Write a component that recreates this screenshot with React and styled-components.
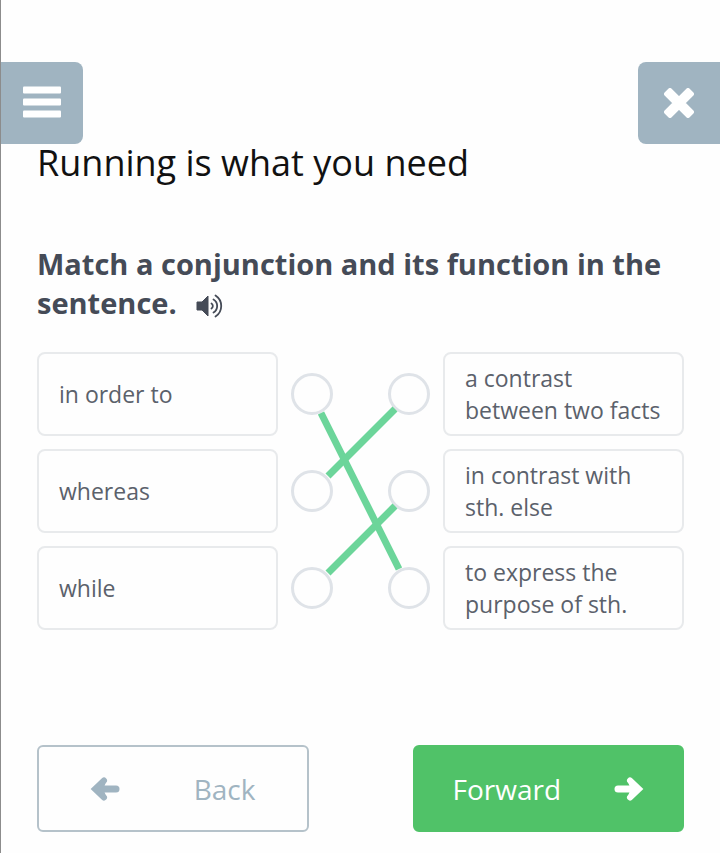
import React from 'react';
import styled, { createGlobalStyle } from 'styled-components';

const GlobalStyle = createGlobalStyle`
	* {
		box-sizing: border-box;
	}

	body {
		margin: 0;
		background: #fefefe;
		font-family: 'Open Sans', 'Noto Sans', sans-serif;
	}
`;

const ROW_HEIGHT = 84;
const ROW_GAP = 13;

const ui = {
	Page: styled.main`
		min-height: 100vh;
		padding-top: 62px;
		border-left: 1px solid #8c8c8c;
	`,
	TopBar: styled.header`
		display: flex;
		justify-content: space-between;
	`,
	CornerButton: styled.button`
		display: flex;
		align-items: center;
		justify-content: center;
		width: 82px;
		height: 82px;
		padding: 0;
		border: 0;
		border-radius: ${({ $side }) => ($side === 'left' ? '0 8px 8px 0' : '8px 0 0 8px')};
		background: #a0b4c1;
		color: #fff;
		cursor: pointer;
	`,
	Content: styled.section`
		padding: 0 36px 20px;
	`,
	Title: styled.h1`
		margin: 0 0 62px;
		color: #111;
		font-size: 36px;
		font-weight: 400;
		line-height: 38px;
	`,
	Task: styled.h2`
		margin: 0 0 30px;
		color: #454b57;
		font-size: 29px;
		font-weight: 700;
		line-height: 39px;
	`,
	SoundButton: styled.button`
		margin: 0 0 0 12px;
		padding: 0;
		border: 0;
		background: none;
		color: #454b57;
		vertical-align: middle;
		cursor: pointer;

		svg {
			display: block;
		}
	`,
	Match: styled.div`
		display: grid;
		grid-template-columns: 1fr 165px 1fr;
	`,
	Column: styled.ul`
		display: grid;
		grid-auto-rows: ${ROW_HEIGHT}px;
		gap: ${ROW_GAP}px;
		margin: 0;
		padding: 0;
		list-style: none;
	`,
	Card: styled.li`
		display: flex;
		align-items: center;
		padding: 0 20px;
		border: 2px solid #e8eaec;
		border-radius: 8px;
		color: #5b616b;
		font-size: 23px;
		line-height: 32px;
	`,
	Links: styled.div`
		position: relative;
		display: grid;
		grid-auto-rows: ${ROW_HEIGHT}px;
		gap: ${ROW_GAP}px;
	`,
	Lines: styled.svg`
		position: absolute;
		inset: 0;
		width: 100%;
		height: 100%;
		pointer-events: none;
	`,
	DotRow: styled.div`
		display: flex;
		align-items: center;
		justify-content: space-between;
		padding: 0 13px;
	`,
	Dot: styled.button`
		width: 42px;
		height: 42px;
		padding: 0;
		border: 3px solid #dfe3e8;
		border-radius: 50%;
		background: #fefefe;
		cursor: pointer;
	`,
	Footer: styled.footer`
		display: grid;
		grid-template-columns: 1fr 1fr;
		gap: 104px;
		margin-top: 115px;
	`,
	NavButton: styled.button`
		display: flex;
		align-items: center;
		justify-content: space-between;
		height: 87px;
		padding: ${({ $primary }) => ($primary ? '0 38px' : '0 51px')};
		border: 2px solid ${({ $primary }) => ($primary ? '#50c268' : '#b5c2ca')};
		border-radius: 6px;
		background: ${({ $primary }) => ($primary ? '#50c268' : 'transparent')};
		color: ${({ $primary }) => ($primary ? '#fff' : '#a0b4c1')};
		font-family: inherit;
		font-size: 28px;
		cursor: pointer;
	`
};

const PAIRS = [
	{ left: 'in order to', right: 'a contrast between two facts' },
	{ left: 'whereas', right: 'in contrast with sth. else' },
	{ left: 'while', right: 'to express the purpose of sth.' }
];

const LINES = [
	{ x1: 43, y1: 61, x2: 121, y2: 217 },
	{ x1: 50, y1: 124, x2: 117, y2: 57 },
	{ x1: 50, y1: 221, x2: 117, y2: 154 }
];

const MenuIcon = () => (
	<svg width="38" height="34" viewBox="0 0 38 34" fill="currentColor" aria-hidden="true">
		<rect width="38" height="7" y="0.500" rx="1" />
		<rect y="12.500" width="38" height="7" rx="1" />
		<rect y="24.500" width="38" height="7" rx="1" />
	</svg>
);

const CloseIcon = () => (
	<svg width="30" height="30" viewBox="0 0 30 30" aria-hidden="true">
		<path
			d="M6 2 2 6 11 15 2 24 6 28 15 19 24 28 28 24 19 15 28 6 24 2 15 11z"
			fill="currentColor"
			stroke="currentColor"
			strokeWidth="4"
			strokeLinejoin="round"
		/>
	</svg>
);

const SoundIcon = () => (
	<svg width="28" height="24" viewBox="0 0 28 24" fill="none" aria-hidden="true">
		<path d="M1 8h5l6-6v20l-6-6H1z" fill="currentColor" stroke="currentColor" strokeLinejoin="round" />
		<path
			d="M15.500 9.500a3 3 0 0 1 0 5M17.500 5.500a7.600 7.600 0 0 1 0 13M19.500 1.500a12.500 12.500 0 0 1 0 21"
			stroke="currentColor"
			strokeWidth="1.800"
			strokeLinecap="round"
		/>
	</svg>
);

const ArrowIcon = ({ back }) => (
	<svg width="30" height="26" viewBox="0 0 30 26" fill="none" aria-hidden="true">
		<g
			transform={back ? 'matrix(-1 0 0 1 30 0)' : undefined}
			stroke="currentColor"
			strokeLinecap="round"
		>
			<path d="M4 13h16" strokeWidth="7" />
			<path d="M16 4.500 25 13l-9 8.500" strokeWidth="6" strokeLinejoin="miter" />
			<path d="M14 6 15.500 10v6L14 20l4 2 7-9-7-9z" fill="currentColor" stroke="none" />
		</g>
	</svg>
);

const App = () => {
	return (
		<React.Fragment>
			<GlobalStyle />
			<ui.Page>
				<ui.TopBar>
					<ui.CornerButton type="button" $side="left" aria-label="Menu">
						<MenuIcon />
					</ui.CornerButton>
					<ui.CornerButton type="button" $side="right" aria-label="Close">
						<CloseIcon />
					</ui.CornerButton>
				</ui.TopBar>
				<ui.Content>
					<ui.Title>Running is what you need</ui.Title>
					<ui.Task>
						Match a conjunction and its function in the sentence.{' '}
						<ui.SoundButton type="button" aria-label="Listen">
							<SoundIcon />
						</ui.SoundButton>
					</ui.Task>
					<ui.Match>
						<ui.Column>
							{PAIRS.map(({ left }) => (
								<ui.Card key={left}>{left}</ui.Card>
							))}
						</ui.Column>
						<ui.Links>
							{PAIRS.map(({ left, right }) => (
								<ui.DotRow key={left}>
									<ui.Dot type="button" aria-label={left} />
									<ui.Dot type="button" aria-label={right} />
								</ui.DotRow>
							))}
							<ui.Lines viewBox="0 0 165 278" aria-hidden="true">
								{LINES.map((line) => (
									<line key={`${line.x1}-${line.y1}`} {...line} stroke="#6cd59a" strokeWidth="7" />
								))}
							</ui.Lines>
						</ui.Links>
						<ui.Column>
							{PAIRS.map(({ right }) => (
								<ui.Card key={right}>{right}</ui.Card>
							))}
						</ui.Column>
					</ui.Match>
					<ui.Footer>
						<ui.NavButton type="button">
							<ArrowIcon back />
							Back
						</ui.NavButton>
						<ui.NavButton type="button" $primary>
							Forward
							<ArrowIcon />
						</ui.NavButton>
					</ui.Footer>
				</ui.Content>
			</ui.Page>
		</React.Fragment>
	);
};

export default App;
